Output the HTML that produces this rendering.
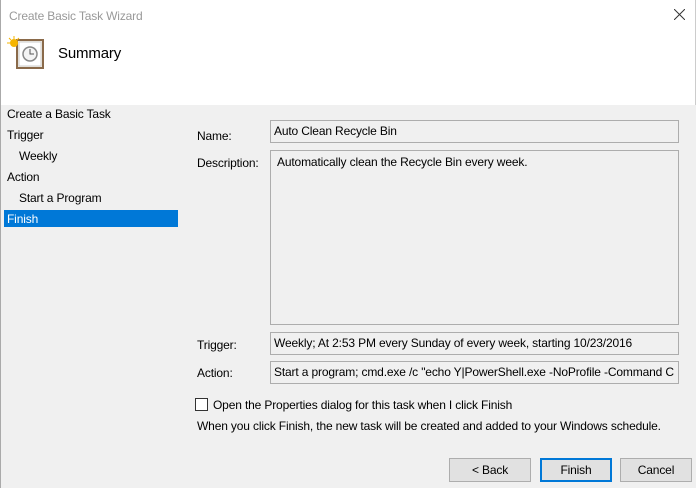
<!DOCTYPE html><html><head><style>
body{margin:0;width:696px;height:488px;position:relative;overflow:hidden;background:#f0f0f0;font-family:"Liberation Sans",sans-serif;font-size:12px;color:#000;letter-spacing:-0.15px}
.a{position:absolute}
.box{position:absolute;left:270px;width:409px;border:1px solid #adadad;background:#f0f0f0;box-sizing:border-box;padding:3px 3px;white-space:nowrap;overflow:hidden}
.btn{position:absolute;top:458px;height:24px;border:1px solid #adadad;background:#e1e1e1;box-sizing:border-box;text-align:center;line-height:22px}
</style></head><body>
<div class="a" style="left:0;top:0;width:696px;height:105px;background:#fff;border-right:1px solid #ccc;box-sizing:border-box"></div>
<div class="a" style="left:0;top:0;width:1px;height:488px;background:#aaa"></div>
<div class="a" style="left:9px;top:9px;color:#999">Create Basic Task Wizard</div>
<svg class="a" style="left:674px;top:9px" width="11" height="11"><path d="M0 0L11 11M11 0L0 11" stroke="#333" stroke-width="1"/></svg>
<svg class="a" style="left:6px;top:36px" width="40" height="34"><rect x="11" y="4" width="26" height="28" fill="#f3efe6" stroke="#8a6a4a" stroke-width="2"/><rect x="13" y="6" width="22" height="24" fill="#fff" stroke="#ccc"/><circle cx="24" cy="18" r="7" fill="#f4f4f4" stroke="#888" stroke-width="1.5"/><path d="M24 13v5h4" stroke="#555" fill="none"/><circle cx="8" cy="7" r="4" fill="#f5b400"/><path d="M8 0v3M1 7h3M3 2l2 2M13 2l-2 2" stroke="#f5b400"/></svg>
<div class="a" style="left:58px;top:45px;font-size:15px">Summary</div>
<div class="a" style="left:7px;top:107px">Create a Basic Task</div>
<div class="a" style="left:7px;top:128px">Trigger</div>
<div class="a" style="left:19px;top:149px">Weekly</div>
<div class="a" style="left:7px;top:170px">Action</div>
<div class="a" style="left:19px;top:191px">Start a Program</div>
<div class="a" style="left:4px;top:210px;width:174px;height:17px;background:#0078d7"></div>
<div class="a" style="left:7px;top:212px;color:#fff">Finish</div>
<div class="a" style="left:197px;top:129px">Name:</div>
<div class="a" style="left:197px;top:156px">Description:</div>
<div class="a" style="left:197px;top:338px">Trigger:</div>
<div class="a" style="left:197px;top:366px">Action:</div>
<div class="box" style="top:120px;height:23px">Auto Clean Recycle Bin</div>
<div class="box" style="top:150px;height:175px;padding:4px 6px">Automatically clean the Recycle Bin every week.</div>
<div class="box" style="top:332px;height:23px">Weekly; At 2:53 PM every Sunday of every week, starting 10/23/2016</div>
<div class="box" style="top:361px;height:23px">Start a program; cmd.exe /c "echo Y|PowerShell.exe -NoProfile -Command C</div>
<div class="a" style="left:195px;top:398px;width:13px;height:13px;border:1px solid #333;background:#fff;box-sizing:border-box"></div>
<div class="a" style="left:213px;top:398px">Open the Properties dialog for this task when I click Finish</div>
<div class="a" style="left:197px;top:419px">When you click Finish, the new task will be created and added to your Windows schedule.</div>
<div class="btn" style="left:449px;width:82px">&lt; Back</div>
<div class="btn" style="left:540px;width:72px;border:2px solid #0078d7;line-height:20px">Finish</div>
<div class="btn" style="left:620px;width:72px">Cancel</div>
</body></html>
